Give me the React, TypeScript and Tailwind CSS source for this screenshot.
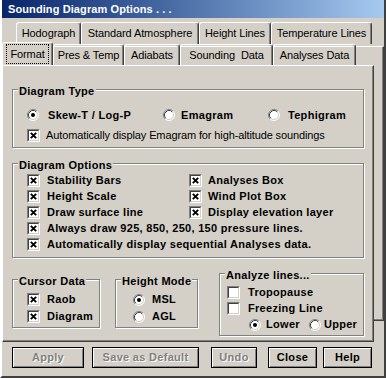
import React from 'react';

const CheckBox = ({ checked }: { checked: boolean }) => (
  <span className="box-border block w-[13px] h-[13px] shrink-0 border border-t-[#808080] border-l-[#808080] border-b-white border-r-white">
    <span className="box-border flex items-center justify-center w-full h-full bg-white border border-t-[#404040] border-l-[#404040] border-b-[#d4d0c8] border-r-[#d4d0c8]">
      {checked && (
        <svg width="7" height="7" viewBox="0 0 7 7">
          <path d="M0.8 0.8 L6.2 6.2 M6.2 0.8 L0.8 6.2" stroke="#000" strokeWidth="1.9" />
        </svg>
      )}
    </span>
  </span>
);

const Radio = ({ checked }: { checked: boolean }) => (
  <svg width="12" height="12" viewBox="0 0 12 12" className="shrink-0">
    <circle cx="6" cy="6" r="5" fill="#fff" />
    <path d="M2.11 9.89 A5.5 5.5 0 0 1 9.89 2.11" stroke="#808080" fill="none" />
    <path d="M9.89 2.11 A5.5 5.5 0 0 1 2.11 9.89" stroke="#fff" fill="none" />
    <path d="M2.82 9.18 A4.5 4.5 0 0 1 9.18 2.82" stroke="#404040" fill="none" />
    <path d="M9.18 2.82 A4.5 4.5 0 0 1 2.82 9.18" stroke="#d4d0c8" fill="none" />
    {checked && <circle cx="6" cy="6" r="2" fill="#000" />}
  </svg>
);

const Group = ({
  title,
  className,
  children,
}: {
  title: string;
  className: string;
  children: React.ReactNode;
}) => (
  <div className={`relative box-border border border-[#808080] shadow-[inset_1px_1px_0_#fff,1px_1px_0_#fff] ${className}`}>
    <span className="absolute left-[5px] top-[-5px] px-[1px] bg-[#d4d0c8] font-bold text-[11px] leading-[13px] tracking-[0.3px]">
      {title}
    </span>
    {children}
  </div>
);

const BackTab = ({ label, w }: { label: string; w: string }) => (
  <div
    className={`${w} h-[22px] box-border border-t border-l border-white border-r border-r-[#404040] rounded-t-[3px] shadow-[inset_-1px_0_0_#808080] flex items-center justify-center text-[11px] tracking-[-0.1px]`}
  >
    {label}
  </div>
);

const FrontTab = ({ label, w }: { label: string; w: string }) => (
  <div
    className={`${w} h-[21px] box-border border-t border-l border-white border-r border-r-[#404040] rounded-t-[3px] shadow-[inset_-1px_0_0_#808080] flex items-center justify-center text-[11px] tracking-[-0.1px] whitespace-pre pt-[1px]`}
  >
    {label}
  </div>
);

const Btn = ({ label, w, ml, disabled }: { label: string; w: string; ml: string; disabled?: boolean }) => (
  <div
    className={`${w} ${ml} h-[21px] box-border border border-black shadow-[inset_1px_1px_0_#fff,inset_-1px_-1px_0_#808080] flex items-center justify-center font-bold text-[11px] tracking-[0.3px] ${
      disabled ? 'text-[#808080] [text-shadow:1px_1px_0_#fff]' : 'text-black'
    }`}
  >
    {label}
  </div>
);

export default function App() {
  return (
    <div className="w-[386px] h-[378px] box-border overflow-hidden bg-[#d4d0c8] text-black border-l-2 border-r-2 border-b-2 border-l-white border-r-[#404040] border-b-[#404040] [font-family:'Liberation_Sans',Arial,sans-serif]">
      {/* title bar */}
      <div className="h-[18px] bg-linear-to-r from-[#0a246a] to-[#a6caf0] pl-[6px] text-white font-bold text-[11px] tracking-[0.1px] leading-[18px]">
        Sounding Diagram Options . . .
      </div>

      <div className="relative mt-[4px]">
        {/* page stacked behind the front row */}
        <div className="absolute left-[14px] top-[24px] w-[368px] h-[275px] box-border border-t border-white border-r border-r-[#404040] border-b border-b-[#404040] shadow-[inset_-1px_-1px_0_#808080]" />

        <div className="flex pl-[14px] h-[22px]">
          <BackTab label="Hodograph" w="w-[65px]" />
          <BackTab label="Standard Atmosphere" w="w-[118px]" />
          <BackTab label="Height Lines" w="w-[72px]" />
          <BackTab label="Temperature Lines" w="w-[101px]" />
        </div>

        <div className="relative z-10 flex items-end h-[23px] mt-[-2px]">
          <div className="relative z-20 w-[51px] h-[25px] mb-[-2px] box-border bg-[#d4d0c8] border-t border-l border-white border-r border-r-[#404040] rounded-t-[3px] shadow-[inset_-1px_0_0_#808080] px-[3px] pt-[1px] pb-[3px]">
            <div className="h-full border border-dotted border-black flex items-center justify-center text-[11px] tracking-[-0.1px]">
              Format
            </div>
          </div>
          <FrontTab label="Pres & Temp" w="w-[71px]" />
          <FrontTab label="Adiabats" w="w-[56px]" />
          <FrontTab label="Sounding  Data" w="w-[93px]" />
          <FrontTab label="Analyses Data" w="w-[83px]" />
        </div>

        {/* front page */}
        <div className="relative z-10 w-[372px] h-[277px] box-border bg-[#d4d0c8] border-t border-l border-white border-r border-b border-r-[#404040] border-b-[#404040] shadow-[inset_-1px_-1px_0_#808080] pl-[9px] pt-[23px] flex flex-col">
          <Group title="Diagram Type" className="w-[352px] h-[59px] pl-[14px] pt-[17px]">
            <div className="flex h-[16px] items-center font-bold text-[11px] tracking-[0.3px]">
              <div className="w-[136px] flex items-center">
                <Radio checked />
                <span className="ml-[9px]">Skew-T / Log-P</span>
              </div>
              <div className="w-[105px] flex items-center">
                <Radio checked={false} />
                <span className="ml-[6px]">Emagram</span>
              </div>
              <div className="flex items-center">
                <Radio checked={false} />
                <span className="ml-[8px]">Tephigram</span>
              </div>
            </div>
            <div className="flex h-[16px] items-center mt-[4px] text-[11px] tracking-[-0.12px]">
              <CheckBox checked />
              <span className="ml-[6px]">Automatically display Emagram for high-altitude soundings</span>
            </div>
          </Group>

          <Group title="Diagram Options" className="w-[352px] h-[95px] mt-[15px] pl-[14px] pt-[8px]">
            <div className="grid grid-cols-[162px_auto] font-bold text-[11px] tracking-[0.3px]">
              {[
                ['Stability Bars', 'Analyses Box'],
                ['Height Scale', 'Wind Plot Box'],
                ['Draw surface line', 'Display elevation layer'],
              ].map(([a, b]) => (
                <React.Fragment key={a}>
                  <div className="flex h-[16px] items-center">
                    <CheckBox checked />
                    <span className="ml-[7px]">{a}</span>
                  </div>
                  <div className="flex h-[16px] items-center">
                    <CheckBox checked />
                    <span className="ml-[6px]">{b}</span>
                  </div>
                </React.Fragment>
              ))}
            </div>
            <div className="flex h-[16px] items-center font-bold text-[11px] tracking-[0.3px]">
              <CheckBox checked />
              <span className="ml-[7px]">Always draw 925, 850, 250, 150 pressure lines.</span>
            </div>
            <div className="flex h-[16px] items-center font-bold text-[11px] tracking-[0.3px]">
              <CheckBox checked />
              <span className="ml-[7px]">Automatically display sequential Analyses data.</span>
            </div>
          </Group>

          <div className="flex items-start mt-[15px] font-bold text-[11px] tracking-[0.3px]">
            <Group title="Cursor Data" className="w-[88px] h-[49px] mt-[6px] pl-[14px] pt-[11px]">
              <div className="flex h-[17px] items-center">
                <CheckBox checked />
                <span className="ml-[7px]">Raob</span>
              </div>
              <div className="flex h-[17px] items-center">
                <CheckBox checked />
                <span className="ml-[7px]">Diagram</span>
              </div>
            </Group>

            <Group title="Height Mode" className="w-[83px] h-[49px] mt-[6px] ml-[15px] pl-[17px] pt-[11px]">
              <div className="flex h-[17px] items-center">
                <Radio checked />
                <span className="ml-[7px]">MSL</span>
              </div>
              <div className="flex h-[17px] items-center">
                <Radio checked={false} />
                <span className="ml-[7px]">AGL</span>
              </div>
            </Group>

            <Group title="Analyze lines..." className="w-[145px] h-[63px] ml-[21px] pl-[7px] pt-[10px]">
              <div className="flex h-[16px] items-center">
                <CheckBox checked={false} />
                <span className="ml-[8px]">Tropopause</span>
              </div>
              <div className="flex h-[16px] items-center">
                <CheckBox checked={false} />
                <span className="ml-[8px]">Freezing Line</span>
              </div>
              <div className="flex h-[17px] items-center pl-[22px]">
                <Radio checked />
                <span className="ml-[5px]">Lower</span>
                <span className="ml-[9px] flex items-center">
                  <Radio checked={false} />
                </span>
                <span className="ml-[3px]">Upper</span>
              </div>
            </Group>
          </div>
        </div>
      </div>

      <div className="flex mt-[5px]">
        <Btn label="Apply" w="w-[72px]" ml="ml-[10px]" disabled />
        <Btn label="Save as Default" w="w-[107px]" ml="ml-[8px]" disabled />
        <Btn label="Undo" w="w-[46px]" ml="ml-[12px]" disabled />
        <Btn label="Close" w="w-[49px]" ml="ml-[11px]" />
        <Btn label="Help" w="w-[49px]" ml="ml-[6px]" />
      </div>
    </div>
  );
}
